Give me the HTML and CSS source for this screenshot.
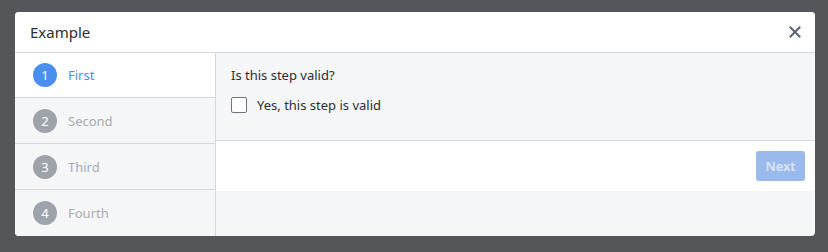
FILE: index.html
```html
<!DOCTYPE html>
<html>
<head>
<meta charset="utf-8">
<link rel="stylesheet" href="styles.css">
</head>
<body>
<div class="modal">
  <div class="header">
    <span class="title">Example</span>
    <svg class="close" width="12" height="12" viewBox="0 0 12 12"><path d="M1.5 1.5L10.5 10.5M10.5 1.5L1.5 10.5" stroke="#5b6371" stroke-width="2" stroke-linecap="square"/></svg>
  </div>
  <div class="body">
    <div class="steps">
      <div class="step active"><span class="num">1</span><span class="label">First</span></div>
      <div class="step"><span class="num">2</span><span class="label">Second</span></div>
      <div class="step"><span class="num">3</span><span class="label">Third</span></div>
      <div class="step"><span class="num">4</span><span class="label">Fourth</span></div>
    </div>
    <div class="content">
      <div class="form">
        <div class="question">Is this step valid?</div>
        <label class="check"><span class="box"></span>Yes, this step is valid</label>
      </div>
      <div class="footer">
        <button class="next">Next</button>
      </div>
    </div>
  </div>
</div>
</body>
</html>
```
FILE: styles.css
```css
html, body {
  margin: 0;
  padding: 0;
  background: #54565a;
  font-family: "Noto Sans", "Open Sans", sans-serif;
}
body {
  padding: 12px 13px 16px 15px;
}
.modal {
  width: 800px;
  height: 224px;
  background: #f5f6f8;
  border-radius: 4px;
  overflow: hidden;
  display: flex;
  flex-direction: column;
}
.header {
  height: 41px;
  background: #fff;
  border-bottom: 1px solid #d6d8dc;
  display: flex;
  align-items: center;
  justify-content: space-between;
  padding: 0 14px 0 15px;
  box-sizing: border-box;
  flex: none;
}
.title {
  font-size: 15px;
  color: #2b2e33;
}
.close {
  display: block;
}
.body {
  display: flex;
  flex: 1;
}
.steps {
  width: 200px;
  border-right: 1px solid #d6d8dc;
  display: flex;
  flex-direction: column;
  flex: none;
}
.step {
  height: 46px;
  box-sizing: border-box;
  border-bottom: 1px solid #d6d8dc;
  display: flex;
  align-items: center;
  padding-left: 18px;
  background: #f5f6f8;
}
.step:last-child {
  border-bottom: none;
}
.step.active {
  background: #fff;
  height: 45px;
}
.num {
  width: 24px;
  height: 24px;
  border-radius: 50%;
  background: #9ea3ab;
  color: #fff;
  font-size: 13px;
  display: flex;
  align-items: center;
  justify-content: center;
  margin-right: 11px;
}
.active .num {
  background: #4a8ff0;
}
.label {
  font-size: 13px;
  color: #a6aab1;
}
.active .label {
  color: #4a8ff0;
}
.content {
  flex: 1;
  display: flex;
  flex-direction: column;
}
.form {
  height: 88px;
  box-sizing: border-box;
  border-bottom: 1px solid #d6d8dc;
  padding: 13px 15px 0;
}
.question {
  font-size: 13px;
  color: #2b2e33;
  line-height: 18px;
}
.check {
  display: flex;
  align-items: center;
  margin-top: 12px;
  font-size: 13px;
  color: #2b2e33;
}
.box {
  width: 14px;
  height: 14px;
  border: 1px solid #6b7380;
  border-radius: 2px;
  background: #fff;
  margin-right: 10px;
}
.footer {
  height: 50px;
  background: #fff;
  display: flex;
  align-items: center;
  justify-content: flex-end;
  padding-right: 10px;
}
.next {
  width: 49px;
  height: 30px;
  border: none;
  border-radius: 3px;
  background: #9ab9ec;
  color: #dfe8f8;
  font-family: inherit;
  font-size: 13px;
  font-weight: 600;
  padding: 0;
}
```
